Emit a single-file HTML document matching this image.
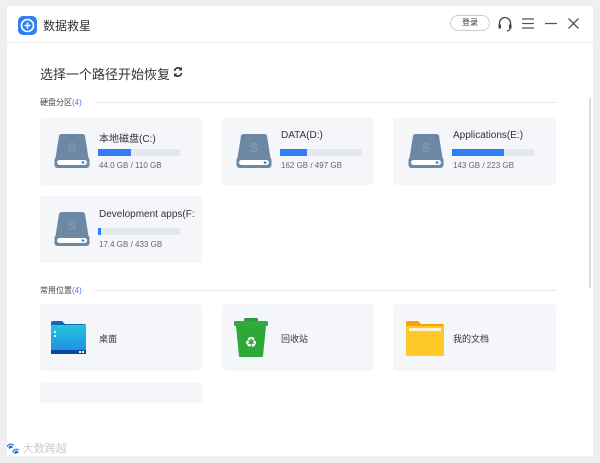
<!DOCTYPE html>
<html><head><meta charset="utf-8"><style>
*{margin:0;padding:0;box-sizing:border-box}
body{width:600px;height:463px;background:#eeeff1;font-family:"Liberation Sans","Noto Sans CJK SC",sans-serif;position:relative;overflow:hidden;color:#333}
.win{position:absolute;left:7px;top:6px;width:586px;height:450px;background:#fff}
.hdr{position:absolute;left:0;top:0;width:586px;height:37px;border-bottom:1px solid #ececec}
.abs{position:absolute}
.card{position:absolute;background:#f4f6f9;border-radius:3px}
.nm{position:absolute;font-size:10px;color:#333;white-space:nowrap}
.sz{position:absolute;font-size:8px;color:#666;white-space:nowrap}
.bar{position:absolute;height:7px;background:#e4e8ee}
.bar i{display:block;height:7px;background:#2f7ef5}
.lbl{position:absolute;font-size:8px;color:#444}
.lbl b{font-weight:normal;color:#3b7cf0}
.line{position:absolute;height:1px;background:#e8e8e8}
</style></head><body>
<div class="win">
<div class="hdr">
 <div class="abs" style="left:11px;top:10px;width:19px;height:19px;border-radius:5px;background:#2d80f2"></div>
 <svg class="abs" style="left:11px;top:10px" width="19" height="19"><circle cx="9.5" cy="9.5" r="6" fill="none" stroke="#fff" stroke-width="1.6"/><path d="M9.5 6.5v6M6.5 9.5h6" stroke="#fff" stroke-width="1.6"/></svg>
 <div class="abs" style="left:36px;top:11px;font-size:12px;color:#333">数据救星</div>
 <div class="abs" style="left:443px;top:9px;width:40px;height:16px;border:1px solid #ccc;border-radius:8px;font-size:8px;text-align:center;line-height:14px">登录</div>
 <svg class="abs" style="left:490px;top:9px" width="16" height="18"><path d="M2.5 11V8a5.5 5.5 0 0 1 11 0v3" fill="none" stroke="#444" stroke-width="1.3"/><rect x="1.5" y="9.5" width="2.5" height="4" fill="#444"/><rect x="12" y="9.5" width="2.5" height="4" fill="#444"/><path d="M13 13.5q0 2-3 2.5" fill="none" stroke="#444" stroke-width="1.2"/></svg>
 <svg class="abs" style="left:514px;top:11px" width="14" height="13"><path d="M1 2h12M1 6.5h12M1 11h12" stroke="#555" stroke-width="1.3"/></svg>
 <svg class="abs" style="left:537px;top:11px" width="14" height="13"><path d="M1 6.5h12" stroke="#555" stroke-width="1.3"/></svg>
 <svg class="abs" style="left:560px;top:11px" width="13" height="13"><path d="M1.5 1.5l10 10M11.5 1.5l-10 10" stroke="#555" stroke-width="1.3"/></svg>
</div>
<div class="abs" style="left:33px;top:58px;font-size:13px;color:#333">选择一个路径开始恢复</div>
<svg class="abs" style="left:165px;top:60px" width="12" height="12"><path d="M2.5 5a3.8 3.8 0 0 1 7-1.3M9.5 7a3.8 3.8 0 0 1-7 1.3" fill="none" stroke="#333" stroke-width="1.6"/><path d="M10 1v3.5H6.5z M2 11V7.5h3.5z" fill="#333"/></svg>
<div class="lbl" style="left:33px;top:91px">硬盘分区<b>(4)</b></div>
<div class="line" style="left:88px;top:96px;width:462px"></div>

<div class="card" style="left:33px;top:112px;width:162px;height:67px"></div>
<div class="card" style="left:215px;top:112px;width:152px;height:67px"></div>
<div class="card" style="left:386px;top:112px;width:163px;height:67px"></div>
<div class="card" style="left:33px;top:190px;width:162px;height:67px"></div>

<svg class="abs" style="left:46px;top:128px" width="38" height="36"><path d="M6 2Q6.5 0 9 0h20q2.5 0 3 2l3.5 22H2.5z" fill="#6d88a4"/><rect x="1.5" y="23" width="35" height="11" rx="3" fill="#6d88a4"/><rect x="4" y="26" width="30" height="5" rx="2.5" fill="#fff"/><circle cx="30" cy="28.5" r="1.3" fill="#2f7ef5"/><text x="19" y="18" font-size="13" font-weight="bold" fill="#8098b1" text-anchor="middle" font-family="Liberation Sans">S</text></svg>
<svg class="abs" style="left:228px;top:128px" width="38" height="36"><path d="M6 2Q6.5 0 9 0h20q2.5 0 3 2l3.5 22H2.5z" fill="#6d88a4"/><rect x="1.5" y="23" width="35" height="11" rx="3" fill="#6d88a4"/><rect x="4" y="26" width="30" height="5" rx="2.5" fill="#fff"/><circle cx="30" cy="28.5" r="1.3" fill="#2f7ef5"/><text x="19" y="18" font-size="13" font-weight="bold" fill="#8098b1" text-anchor="middle" font-family="Liberation Sans">S</text></svg>
<svg class="abs" style="left:400px;top:128px" width="38" height="36"><path d="M6 2Q6.5 0 9 0h20q2.5 0 3 2l3.5 22H2.5z" fill="#6d88a4"/><rect x="1.5" y="23" width="35" height="11" rx="3" fill="#6d88a4"/><rect x="4" y="26" width="30" height="5" rx="2.5" fill="#fff"/><circle cx="30" cy="28.5" r="1.3" fill="#2f7ef5"/><text x="19" y="18" font-size="13" font-weight="bold" fill="#8098b1" text-anchor="middle" font-family="Liberation Sans">S</text></svg>
<svg class="abs" style="left:46px;top:206px" width="38" height="36"><path d="M6 2Q6.5 0 9 0h20q2.5 0 3 2l3.5 22H2.5z" fill="#6d88a4"/><rect x="1.5" y="23" width="35" height="11" rx="3" fill="#6d88a4"/><rect x="4" y="26" width="30" height="5" rx="2.5" fill="#fff"/><circle cx="30" cy="28.5" r="1.3" fill="#2f7ef5"/><text x="19" y="18" font-size="13" font-weight="bold" fill="#8098b1" text-anchor="middle" font-family="Liberation Sans">S</text></svg>

<div class="nm" style="left:92px;top:124px">本地磁盘(C:)</div>
<div class="bar" style="left:91px;top:143px;width:82px"><i style="width:33px"></i></div>
<div class="sz" style="left:92px;top:155px">44.0 GB / 110 GB</div>

<div class="nm" style="left:274px;top:124px">DATA(D:)</div>
<div class="bar" style="left:273px;top:143px;width:82px"><i style="width:27px"></i></div>
<div class="sz" style="left:274px;top:155px">162 GB / 497 GB</div>

<div class="nm" style="left:446px;top:124px">Applications(E:)</div>
<div class="bar" style="left:445px;top:143px;width:82px"><i style="width:52px"></i></div>
<div class="sz" style="left:446px;top:155px">143 GB / 223 GB</div>

<div class="nm" style="left:92px;top:203px">Development apps(F:</div>
<div class="bar" style="left:91px;top:222px;width:82px"><i style="width:3px"></i></div>
<div class="sz" style="left:92px;top:234px">17.4 GB / 433 GB</div>

<div class="lbl" style="left:33px;top:279px">常用位置<b>(4)</b></div>
<div class="line" style="left:88px;top:284px;width:462px"></div>

<div class="card" style="left:33px;top:298px;width:162px;height:67px"></div>
<div class="card" style="left:215px;top:298px;width:152px;height:67px"></div>
<div class="card" style="left:386px;top:298px;width:163px;height:67px"></div>
<div class="card" style="left:33px;top:377px;width:162px;height:20px;border-radius:3px 3px 0 0"></div>

<svg class="abs" style="left:43px;top:314px" width="38" height="36"><path d="M1 3q0-2 2-2h9l3 3h19q2 0 2 2v2H1z" fill="#1565c0"/><rect x="1" y="5" width="35" height="29" rx="1" fill="url(#g1)"/><rect x="1" y="30" width="35" height="4" fill="#0d47a1"/><rect x="4" y="11" width="2" height="2" fill="#e0f7fa"/><rect x="4" y="15" width="2" height="2" fill="#e0f7fa"/><rect x="29" y="31" width="2" height="2" fill="#fff"/><rect x="32" y="31" width="2" height="2" fill="#fff"/><defs><linearGradient id="g1" x1="0" y1="0" x2="0" y2="1"><stop offset="0" stop-color="#26c6da"/><stop offset="1" stop-color="#1e88e5"/></linearGradient></defs></svg>
<svg class="abs" style="left:227px;top:312px" width="34" height="40"><rect x="10" y="0" width="14" height="4" rx="1.5" fill="#2e9a3a"/><rect x="0" y="3" width="34" height="5" rx="1.5" fill="#35a840"/><path d="M2 8h30l-3 30q0 1-1 1H6q-1 0-1-1z" fill="#2fa83a"/><text x="17" y="29" font-size="14" fill="#fff" text-anchor="middle" font-family="DejaVu Sans">♻</text></svg>
<svg class="abs" style="left:399px;top:315px" width="38" height="36"><path d="M0 2q0-2 2-2h10l3 3h21q2 0 2 2v3H0z" fill="#ffa000"/><rect x="0" y="5" width="38" height="30" rx="1" fill="#ffca28"/><rect x="3" y="7" width="32" height="3" fill="#fff3d6"/></svg>

<div class="nm" style="left:92px;top:326px;font-size:9px">桌面</div>
<div class="nm" style="left:274px;top:326px;font-size:9px">回收站</div>
<div class="nm" style="left:446px;top:326px;font-size:9px">我的文档</div>

<div class="abs" style="left:582px;top:92px;width:2px;height:190px;background:#ddd"></div>
</div>
<div class="abs" style="left:6px;top:440px;font-size:11px;color:#ccc">🐾 大数跨越</div>
</body></html>
